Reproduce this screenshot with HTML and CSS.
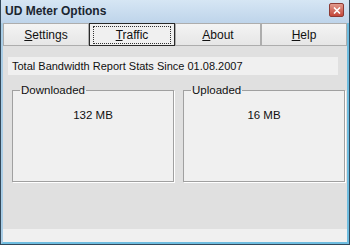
FILE: index.html
```html
<!DOCTYPE html>
<html lang="en">
<head>
  <meta charset="UTF-8">
  <title>UD Meter Options</title>
  <link rel="stylesheet" href="styles.css">
</head>
<body>

<div class="window">
  <div class="frame">
    <div class="titlebar">
      <span class="title">UD Meter Options</span>
      <span class="close">
        <svg width="8" height="7" viewBox="0 0 8 7"><path d="M1 0.5 L7 6.5 M7 0.5 L1 6.5" stroke="#fff" stroke-width="1.6"/></svg>
      </span>
    </div>

    <div class="tabs">
      <div class="tab"><u>S</u>ettings</div>
      <div class="tab active"><span class="focus"><u>T</u>raffic</span></div>
      <div class="tab"><u>A</u>bout</div>
      <div class="tab"><u>H</u>elp</div>
    </div>

    <div class="content">
      <div class="stats">Total Bandwidth Report Stats Since 01.08.2007</div>

      <div class="groups">
        <fieldset class="group">
          <legend>Downloaded</legend>
          <div class="value">132 MB</div>
        </fieldset>
        <fieldset class="group">
          <legend>Uploaded</legend>
          <div class="value">16 MB</div>
        </fieldset>
      </div>
    </div>

    <div class="status"></div>
  </div>
</div>

</body>
</html>
```

FILE: styles.css
```css
body {
  margin: 0;
  font-family: "Liberation Sans", Arial, sans-serif;
  font-size: 12px;
  color: #111;
  background: #e0e0e0;
}

.window {
  width: 348px;
  height: 244px;
  border: 1px solid #34495a;
  border-top: none;
  background: #e0e0e0;
}

.frame {
  height: 242px;
  border-left: 2px solid #a9cde6;
  border-right: 2px solid #6fbde0;
  border-bottom: 2px solid #6fbde0;
  display: flex;
  flex-direction: column;
}

.titlebar {
  height: 23px;
  margin-left: -2px;
  margin-right: -2px;
  padding: 0 5px 0 4px;
  background: linear-gradient(#d6e6f4, #bed4ea);
  display: flex;
  justify-content: space-between;
  align-items: center;
}

.title {
  font-weight: bold;
  font-size: 12px;
  color: #1b2530;
  margin-top: -2px;
}

.close {
  width: 13px;
  height: 12px;
  margin-top: -3px;
  border: 1px solid #8c3a34;
  border-radius: 2px;
  background: linear-gradient(#e19a8e, #c4473a);
  display: flex;
  justify-content: center;
  align-items: center;
}

.tabs {
  display: grid;
  grid-template-columns: 86px 86px 86px 86px;
  height: 23px;
  background: #e8e8e8;
}

.tab {
  border: 1px solid #adadad;
  background: linear-gradient(#f4f4f4, #e6e6e6);
  display: flex;
  justify-content: center;
  align-items: center;
}

.tab.active {
  border: 1px solid #2a2a2a;
  background: #f0f0f0;
}

.focus {
  width: 76px;
  height: 16px;
  line-height: 16px;
  text-align: center;
  border: 1px dotted #333;
}

.content {
  flex: 1;
  padding: 11px 2px 0 5px;
}

.stats {
  width: 326px;
  height: 18px;
  line-height: 18px;
  padding-left: 4px;
  font-size: 11px;
  background: #f0f0f0;
}

.groups {
  display: grid;
  grid-template-columns: 162px 162px;
  gap: 9px;
  margin-top: 8px;
  padding-left: 4px;
}

.group {
  margin: 0;
  padding: 0 7px;
  height: 97px;
  border: 1px solid #a0a0a0;
  box-shadow: 1px 1px 0 #fff;
  background: #f0f0f0;
  font-size: 11.5px;
}

.group legend {
  padding: 0 1px;
  line-height: 14px;
}

.value {
  text-align: center;
  padding-top: 12px;
}

.status {
  height: 13px;
  background: #f0f0f0;
}
```
